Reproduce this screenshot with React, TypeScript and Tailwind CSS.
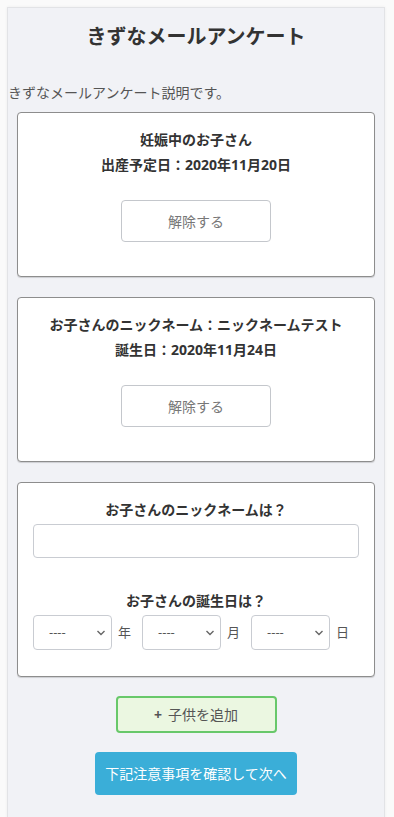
import React from "react";

const font = { fontFamily: '"Open Sans", "Noto Sans CJK JP", sans-serif' };

function Chevron() {
  return (
    <svg className="pointer-events-none absolute right-[5px] top-1/2 -translate-y-1/2" width="10" height="7" viewBox="0 0 10 7" fill="none">
      <path d="M1.5 1.5 L5 5 L8.5 1.5" stroke="#666" strokeWidth="1.4" />
    </svg>
  );
}

function DateSelect({ unit, last }: { unit: string; last?: boolean }) {
  return (
    <>
      <div className="relative h-[35px] w-[79px] rounded-[4px] border border-[#c9ccd2] bg-white">
        <span className="absolute left-[15px] top-1/2 -translate-y-1/2 text-[13px] text-[#555]">----</span>
        <Chevron />
      </div>
      <span className={`ml-[6px] text-[13px] text-[#555] ${last ? "" : "mr-[11px]"}`}>{unit}</span>
    </>
  );
}

function ChildCard({ line1, line2 }: { line1: string; line2: string }) {
  return (
    <div className="mx-[9px] flex flex-col items-center rounded-[4px] border border-[#8d8d8d] bg-white pt-[14px] pb-[34px] shadow-[0_1px_1px_rgba(0,0,0,0.15)]">
      <p className="text-[14px] font-bold leading-[25px] text-[#333]">{line1}</p>
      <p className="text-[14px] font-bold leading-[25px] text-[#333]">{line2}</p>
      <button className="mt-[23px] h-[42px] w-[150px] rounded-[4px] border border-[#c4c7cc] bg-white text-[14px] text-[#777]">
        解除する
      </button>
    </div>
  );
}

export default function App() {
  return (
    <div className="min-h-screen bg-[#fafafa] pt-[7px]" style={font}>
      <div className="ml-[7px] w-[378px] min-h-[820px] border border-[#e2e3e6] bg-[#f1f2f6] pt-[15px] shadow-[0_0_3px_rgba(0,0,0,0.06)]">
        <h1 className="text-center text-[20px] font-bold leading-[28px] text-[#333]">きずなメールアンケート</h1>
        <p className="mt-[32px] text-[14px] leading-[20px] text-[#555]">きずなメールアンケート説明です。</p>

        <div className="mt-[9px] flex flex-col gap-[20px]">
          <ChildCard line1="妊娠中のお子さん" line2="出産予定日：2020年11月20日" />
          <ChildCard line1="お子さんのニックネーム：ニックネームテスト" line2="誕生日：2020年11月24日" />

          <div className="mx-[9px] flex flex-col rounded-[4px] border border-[#8d8d8d] bg-white px-[15px] pt-[14px] pb-[26px] shadow-[0_1px_1px_rgba(0,0,0,0.15)]">
            <p className="text-center text-[14px] font-bold leading-[25px] text-[#333]">お子さんのニックネームは？</p>
            <input className="mt-[2px] h-[34px] w-full rounded-[4px] border border-[#c9ccd2] bg-white px-2 text-[13px] outline-none" />
            <p className="mt-[30px] text-center text-[14px] font-bold leading-[25px] text-[#333]">お子さんの誕生日は？</p>
            <div className="mt-[2px] flex items-center">
              <DateSelect unit="年" />
              <DateSelect unit="月" />
              <DateSelect unit="日" last />
            </div>
          </div>
        </div>

        <div className="mt-[19px] flex flex-col items-center gap-[19px]">
          <button className="h-[37px] w-[161px] rounded-[4px] border-2 border-[#68c86a] bg-[#ebf7e1] text-[14px] text-[#555]">
            <span className="mr-[6px] font-bold">+</span>子供を追加
          </button>
          <button className="h-[43px] w-[202px] rounded-[4px] bg-[#3aaed8] text-[14px] text-white">
            下記注意事項を確認して次へ
          </button>
        </div>
      </div>
    </div>
  );
}
